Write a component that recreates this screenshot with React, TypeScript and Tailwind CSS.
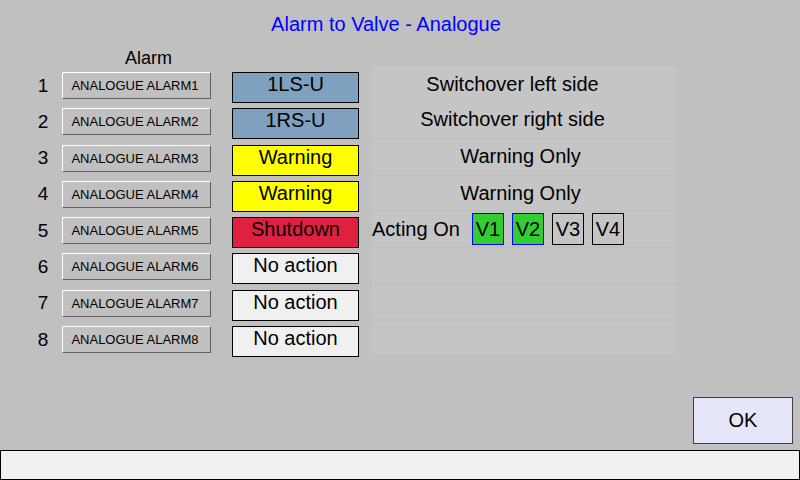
import React from 'react';

type Row = { n: number; action: string; bg: string };

const rows: Row[] = [
  { n: 1, action: '1LS-U', bg: 'bg-[#80a0c0]' },
  { n: 2, action: '1RS-U', bg: 'bg-[#80a0c0]' },
  { n: 3, action: 'Warning', bg: 'bg-[#ffff00]' },
  { n: 4, action: 'Warning', bg: 'bg-[#ffff00]' },
  { n: 5, action: 'Shutdown', bg: 'bg-[#e02040]' },
  { n: 6, action: 'No action', bg: 'bg-[#f0f0f0]' },
  { n: 7, action: 'No action', bg: 'bg-[#f0f0f0]' },
  { n: 8, action: 'No action', bg: 'bg-[#f0f0f0]' },
];

const valves = [
  { id: 'V1', on: true },
  { id: 'V2', on: true },
  { id: 'V3', on: false },
  { id: 'V4', on: false },
];

const Panel: React.FC<{ className?: string; children?: React.ReactNode }> = ({ className = '', children }) => (
  <div className={`bg-[#c5c5c5] ${className}`}>{children}</div>
);

const App: React.FC = () => {
  return (
    <div
      className="w-[800px] h-[480px] bg-[#c0c0c0] flex flex-col text-black overflow-hidden"
      style={{ fontFamily: '"Liberation Sans", Arial, sans-serif' }}
    >
      <div className="h-[48px] pt-[13px] pr-[28px] text-center text-[20px] leading-[23px] text-[#0000ff]">
        Alarm to Valve - Analogue
      </div>
      <div className="h-[19px] pl-[125px] text-[18px] leading-[20px]">Alarm</div>

      <div className="flex items-start flex-1">
        {/* left: numbers, alarm buttons, actions */}
        <div className="flex flex-col pt-[5px] pl-[31px]">
          {rows.map(r => (
            <div key={r.n} className="flex items-start h-[36.3px]">
              <div className="flex items-center h-[27px]">
                <span className="w-[24px] text-center text-[19px] leading-[22px]">{r.n}</span>
                <div className="ml-[7px] w-[149px] h-[27px] flex items-center justify-center pr-[3px] border border-t-white border-l-white border-b-[#606060] border-r-[#606060] text-[13px] leading-[15px]">
                  ANALOGUE ALARM{r.n}
                </div>
              </div>
              <div className={`ml-[21px] w-[127px] h-[31px] border border-black text-center text-[20px] leading-[23px] ${r.bg}`}>
                {r.action}
              </div>
            </div>
          ))}
        </div>

        {/* right: descriptions */}
        <div className="ml-[13px] w-[303px] flex flex-col gap-[2px] text-[20px] leading-[23px]">
          <Panel className="h-[70.6px] flex flex-col pr-[22px]">
            <div className="h-[35px] flex items-center justify-center">Switchover left side</div>
            <div className="h-[34px] flex items-center justify-center">Switchover right side</div>
          </Panel>
          <Panel className="h-[34.3px] flex items-center justify-center pr-[6px]">Warning Only</Panel>
          <Panel className="h-[34.3px] flex items-center justify-center pr-[6px]">Warning Only</Panel>
          <Panel className="h-[34.3px] flex items-center">
            <span className="w-[90px]">Acting On</span>
            <div className="ml-[10px] flex gap-[8px]">
              {valves.map(v => (
                <div
                  key={v.id}
                  className={`w-[32px] h-[32px] flex items-center justify-center border ${
                    v.on ? 'bg-[#33cc33] border-[#0000ff]' : 'border-black'
                  }`}
                >
                  {v.id}
                </div>
              ))}
            </div>
          </Panel>
          <Panel className="h-[34.3px]" />
          <Panel className="h-[34.3px]" />
          <Panel className="h-[34.3px]" />
        </div>
      </div>

      <div className="flex justify-end pr-[7px] mb-[6px]">
        <button className="w-[100px] h-[47px] bg-[#e6e6fa] border border-[#404040] text-[20px] leading-[23px]">
          OK
        </button>
      </div>
      <div className="h-[30px] bg-[#f0f0f0] border border-black" />
    </div>
  );
};

export default App;
